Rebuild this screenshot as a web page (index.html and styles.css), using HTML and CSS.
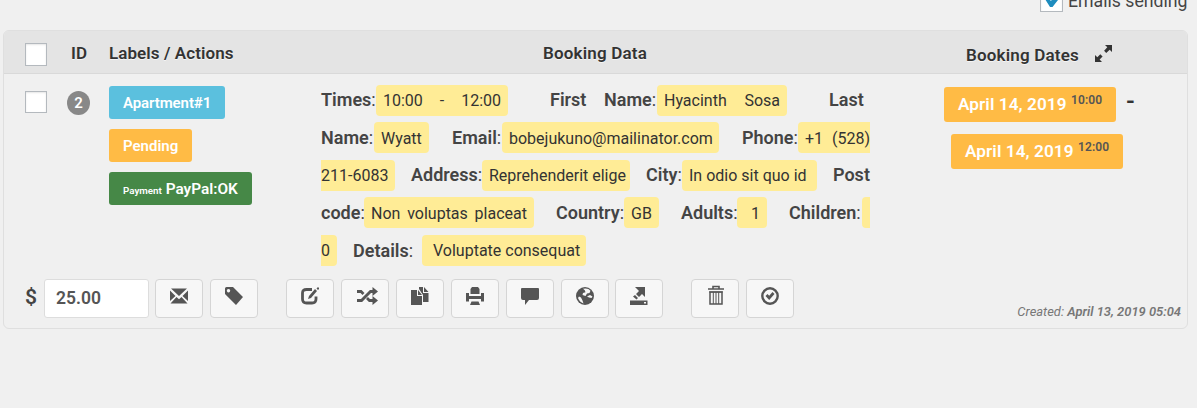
FILE: index.html
```html
<!DOCTYPE html>
<html lang="en">
<head>
<meta charset="utf-8">
<title>Bookings</title>
<link rel="stylesheet" href="styles.css">
</head>
<body>
<div class="topbar">
  <span class="check check-on"><svg width="22" height="22" viewBox="0 0 22 22"><path d="M4 9l2-2 4 4 5-7 2 3v3l-5.500 7h-2.500z" fill="#1e8cbe"/></svg></span>
  <label class="send">Emails sending</label>
</div>
<main class="panel">
  <header class="head">
    <span class="check"></span>
    <b class="h-id">ID</b>
    <b class="h-labels">Labels / Actions</b>
    <b class="h-data">Booking Data</b>
    <b class="h-dates">Booking Dates</b>
    <svg class="expand" width="18" height="18" viewBox="0 0 18 18" fill="#333"><path d="M10 0h7v7l-2.300-2.300-3.500 3.200-2.100-2.100 3.200-3.500zM0 10l2.300 2.300 3-3 2.300 2.300-3 3L7 17H0z"/></svg>
  </header>
  <section class="row">
    <span class="check"></span>
    <span class="num">2</span>
    <div class="labels">
      <span class="tag blue">Apartment#1</span>
      <span class="tag amber">Pending</span>
      <span class="tag green"><small>Payment</small> PayPal:OK</span>
    </div>
    <div class="data">
      <div class="line l1"><span><b>Times</b>:</span><span class="chip">10:00 - 12:00</span><b>First</b><span><b>Name</b>:</span><span class="chip">Hyacinth Sosa</span><b>Last</b></div>
      <div class="line l2"><span><b>Name</b>:</span><span class="chip">Wyatt</span><span><b>Email</b>:</span><span class="chip">bobejukuno@mailinator.com</span><span><b>Phone</b>:</span><span class="chip open-right">+1 (528)</span></div>
      <div class="line l3"><span class="chip open-left">211-6083</span><span><b>Address</b>:</span><span class="chip">Reprehenderit elige</span><span><b>City</b>:</span><span class="chip trail">In odio sit quo id</span><b>Post</b></div>
      <div class="line l4"><span><b>code</b>:</span><span class="chip">Non voluptas placeat</span><span><b>Country</b>:</span><span class="chip">GB</span><span><b>Adults</b>:</span><span class="chip lead">1</span><span><b>Children</b>:</span><span class="chip open-right"></span></div>
      <div class="line l5"><span class="chip open-left">0</span><span><b>Details</b>:</span><span class="chip lead-sm">Voluptate consequat</span></div>
    </div>
    <div class="dates">
      <div class="date-row"><span class="date">April 14, 2019 <sup>10:00</sup></span><b class="dash">-</b></div>
      <div class="date-row second"><span class="date">April 14, 2019 <sup>12:00</sup></span></div>
    </div>
  </section>
  <footer class="foot">
    <b class="cur">$</b>
    <span class="cost">25.00</span>
    <div class="group g1">
      <span class="btn"><svg viewBox="0 0 18 18"><path d="M1 1.500h16L9 9zM0 3.500L5.500 9 0 14zM18 3.500V14l-5.500-5zM6.500 10L9 12.300 11.500 10l6 6.500H.5z"/></svg></span>
      <span class="btn"><svg viewBox="0 0 18 18"><path fill-rule="evenodd" d="M0 1.500Q0 0 1.500 0H8l10 10-7 8L0 7zM3.500 2a1.700 1.700 0 1 0 .01 0z"/></svg></span>
    </div>
    <div class="group g2">
      <span class="btn"><svg viewBox="0 0 18 18"><path d="M11 2.500H5.500Q1.500 2.500 1.500 6v6q0 4 4 4H11q4 0 4-4V9.500" fill="none" stroke="#555" stroke-width="2.800"/><path d="M8 9l6-7 2 2-6 7-3 1zM15.500 1.500L17 0l1.500 1.500L17 3z"/></svg></span>
      <span class="btn"><svg class="wide" viewBox="0 0 22 18"><path d="M1 4.500h4l2.500 2.500M1 13.500h4.500l9-9H18M11 11l2.500 2.500H18" fill="none" stroke="#555" stroke-width="2.800"/><path d="M16.500 0l5.500 4.500L16.500 9zM16.500 9l5.500 4.500-5.500 4.500z"/></svg></span>
      <span class="btn"><svg viewBox="0 0 18 18"><path d="M0 3h6v6h5v9H0zM7 3l4 5H7zM8 0h4v6h5.500v9H12V8L8 2zM13 0l4.500 5H13z"/></svg></span>
      <span class="btn"><svg viewBox="0 0 18 18"><path d="M4.500 2L6 0h6l1.500 2v5h-9zM0 6h3v3h12V6h3v8.500h-3V12H3v2.500H0zM5.500 14.500h7l1.500 3.500H4z"/></svg></span>
      <span class="btn"><svg viewBox="0 0 18 18"><path d="M1 1h16q1 0 1 1v9q0 2-2 2H8l-4 5v-5H2q-2 0-2-2V2q0-1 1-1z"/></svg></span>
      <span class="btn"><svg viewBox="0 0 18 18"><circle cx="9" cy="9" r="9"/><path d="M7 1.800q5-1.300 7.500 2L13.500 6l-2.500.5L9.500 9 6.500 8l.5-2 2.500-.8-.7-2zM11 9.500l3-1.500 2.500 1.500-1 1.500-2.500-.5zM3 9.500l2 1 1.500 3 1 3Q3.500 15 2 11z" fill="#f7f7f7"/></svg></span>
      <span class="btn"><svg viewBox="0 0 18 18"><path fill-rule="evenodd" d="M5 0h10v10l-3-3-3 3-3-3 3-3zM5 8l3 3-1.500 1.500L3 9.500zM0 13.500h17.500V18H0zM14 15v1.500h2V15z"/></svg></span>
    </div>
    <div class="group g3">
      <span class="btn"><svg class="tall" viewBox="0 0 18 20"><path d="M6 4V1.500h6V4M1 4h16" fill="none" stroke="#555" stroke-width="1.600"/><path d="M3 7v12h12V7z" fill="none" stroke="#555" stroke-width="1.500"/><path d="M6.300 7v12M9 7v12M11.700 7v12M2 7h14" stroke="#555"/></svg></span>
      <span class="btn"><svg viewBox="0 0 18 18"><circle cx="9" cy="9" r="7.700" fill="none" stroke="#555" stroke-width="2.400"/><path d="M4.500 9l2-2 1.700 1.700L11.500 5l2 2-5.300 6z"/></svg></span>
    </div>
    <span class="created">Created: <b>April 13, 2019 05:04</b></span>
  </footer>
</main>
</body>
</html>
```
FILE: styles.css
```css
* { box-sizing: border-box; }
body { margin: 0; height: 408px; overflow: hidden; background: #f0f0f0; font-family: Roboto, "Liberation Sans", sans-serif; font-size: 16px; color: #333; }
b { font-weight: 600; }
.topbar { height: 30px; display: flex; padding-left: 1040px; }
.check { display: block; flex: none; width: 22px; height: 22px; background: #fff; border: 1px solid #b4b9be; box-shadow: inset 0 1px 2px rgba(0,0,0,.1); }
.check-on { margin-top: -11px; width: 23px; height: 23px; }
.check-on svg { display: block; }
.send { margin: -9px 0 0 5px; font-size: 17.700px; line-height: 21px; color: #444; white-space: nowrap; }
.panel { margin-left: 3px; width: 1185px; height: 299px; border: 1px solid #dfdfdf; border-radius: 6px; }
.head { height: 43px; background: #e4e4e4; border-bottom: 1px solid #d9d9d9; border-radius: 5px 5px 0 0; display: grid; grid-template-columns: 67px 38px 434px 423px 129px 18px; align-items: center; padding-top: 3px; font-size: 17px; letter-spacing: .08px; line-height: 20px; text-shadow: 0 1px 0 #f5f5f5; white-space: nowrap; }
.head b { padding-bottom: 2px; }
.head .check { margin: 2px 0 0 21px; height: 23px; }
.h-data, .h-dates { letter-spacing: .18px; }
.head .h-dates { padding-top: 4px; }
.row { height: 199px; display: grid; grid-template-columns: 63px 42px 212px 623px 220px; align-items: start; }
.row .check { margin: 17px 0 0 21px; }
.num { margin-top: 17px; width: 23px; height: 24px; border-radius: 50%; background: #888; color: #fff; font-weight: 600; font-size: 15px; line-height: 24px; text-align: center; }
.labels { padding-top: 12px; display: flex; flex-direction: column; align-items: flex-start; gap: 10px; }
.tag { height: 33px; padding: 0 14px; border-radius: 3px; color: #fff; font-size: 15px; font-weight: 600; line-height: 34px; white-space: nowrap; }
.tag small { font-size: 9.800px; }
.blue { background: #5bc0de; letter-spacing: -.09px; }
.amber { background: #ffbb45; }
.green { background: #468847; font-size: 15.400px; width: 143px; }
.data { padding-top: 7.500px; }
.line { display: grid; height: 37.500px; align-items: center; white-space: nowrap; font-size: 18px; line-height: 31px; color: #444; }
.l1 { grid-template-columns: 55px 174px 54px 53px 172px 41px; }
.l1 > :not(.chip) { padding-bottom: 1px; }
.l2 { grid-template-columns: 53px 78px 50px 240px 56px 72px; }
.l3 { grid-template-columns: 90px 71px 164px 36px 151px 37px; }
.l3 > :not(.chip) { padding-bottom: 1px; }
.l4 { grid-template-columns: 43px 192px 68px 57px 56px 52px 73px 8px; }
.l5 { grid-template-columns: 32px 69px 164px; }
.chip { height: 31px; padding: 0 7px; line-height: 32px; background: #ffec96; border-radius: 4px; font-size: 16px; color: #333; text-align-last: justify; }
.l1 .chip:nth-child(2) { width: 132px; }
.l1 .chip:nth-child(5) { width: 130px; }
.l2 .chip:nth-child(2) { width: 55px; }
.l2 .chip:nth-child(4) { width: 217px; }
.l3 .chip:nth-child(1) { width: 74px; }
.l3 .chip:nth-child(3) { width: 148px; }
.l3 .chip:nth-child(5) { width: 135px; }
.l4 .chip:nth-child(2) { width: 170px; }
.l4 .chip:nth-child(4) { width: 35px; }
.l4 .chip:nth-child(6) { width: 30px; }
.l5 .chip:nth-child(1) { width: 16px; }
.chip.open-right { border-radius: 4px 0 0 4px; padding-right: 0; }
.chip.open-left { border-radius: 0 4px 4px 0; padding-left: 0; }
.chip.trail { padding-right: 11px; }
.chip.lead { padding-left: 14px; }
.chip.lead-sm { padding-left: 11px; }
.l2 .chip, .l4 .chip { line-height: 33px; }
.dates { padding-top: 13px; }
.date-row { display: flex; height: 47px; }
.second { padding-left: 7px; }
.date { width: 172px; height: 35px; padding-left: 14px; border-radius: 3px; background: #ffbb45; color: #fff; font-weight: 600; font-size: 17.200px; letter-spacing: .08px; line-height: 34px; white-space: nowrap; }
.date sup { color: #555; font-size: 12px; line-height: 0; vertical-align: 6px; }
.dash { margin-left: 10px; font-size: 24px; line-height: 28px; }
.foot { height: 55px; padding: 6px 6px 0 21px; display: flex; align-items: flex-start; }
.cur { width: 19px; font-size: 21px; line-height: 36px; color: #444; }
.cost { width: 105px; height: 39px; border: 1px solid #ddd; border-radius: 3px; background: #fff; padding-left: 11px; font-size: 17.500px; font-weight: 600; line-height: 36px; color: #555; }
.group { display: flex; gap: 7px; }
.g1 { margin-left: 6px; }
.g2 { margin-left: 28px; }
.g2 .btn:last-child { margin-left: -1px; }
.g3 { margin-left: 28px; }
.btn { width: 48px; height: 39px; border: 1px solid #d5d5d5; border-radius: 4px; background: #f7f7f7; display: flex; justify-content: center; padding-top: 7px; }
.btn svg { width: 18px; height: 18px; fill: #555; }
.btn .wide { width: 22px; margin-left: 3px; }
.btn .tall { height: 20px; margin: -2px 0 0 1px; }
.created { margin: 25px 0 0 auto; font-size: 12.930px; line-height: 16px; font-style: italic; color: #777; white-space: nowrap; }
```
